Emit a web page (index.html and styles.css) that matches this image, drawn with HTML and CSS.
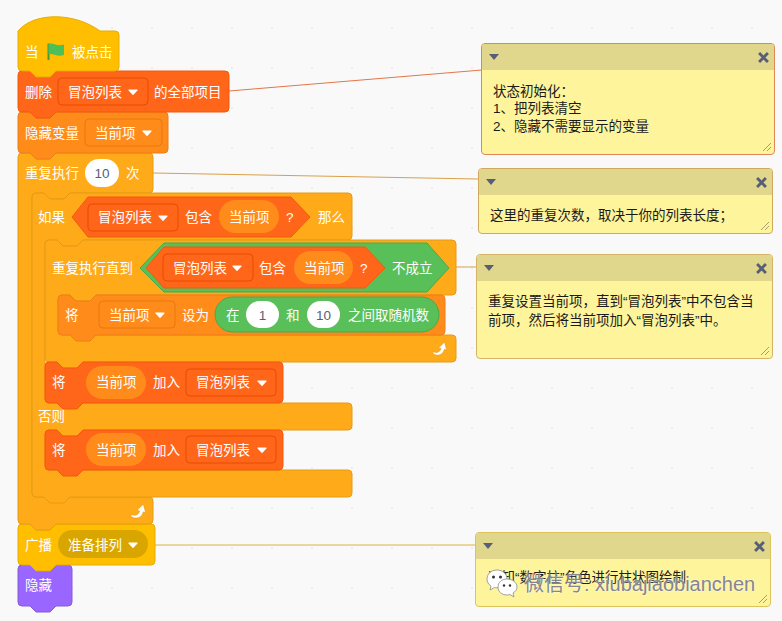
FILE: index.html
```html
<!DOCTYPE html>
<html lang="zh">
<head>
<meta charset="utf-8">
<title>冒泡排序积木</title>
<link rel="stylesheet" href="styles.css">
</head>
<body>
<main class="canvas">
<svg class="blocks" width="782" height="621" viewBox="0 0 782 621">
  <defs>
    <symbol id="caret" viewBox="0 0 10 6"><path d="M1 1H9L5 5.4Z" fill="#fff" stroke="#fff" stroke-width="1.2" stroke-linejoin="round"/></symbol>
    <symbol id="loop" viewBox="0 0 16 16"><path d="M1 11.200C4 13 8.600 12.600 9.600 8L7 7.200L13.400 1.200L15.600 9.600L13.200 8.900C12 14.600 6 17 1 13.400Z" fill="#fff" stroke="#d98f0f" stroke-width="0.5"/></symbol>
  </defs>

  <line class="link link-red" x1="229" y1="91" x2="482" y2="70"/>
  <line class="link link-amber" x1="153" y1="173" x2="478" y2="179"/>
  <line class="link link-amber" x1="456" y1="267" x2="477" y2="267"/>
  <line class="link link-yellow" x1="155" y1="545" x2="476" y2="545"/>

  <!-- 隐藏 -->
  <path class="looks" d="M18 569Q18 565 22 565H30L36 571H50L56 565H68Q72 565 72 569V602Q72 606 68 606H56L50 612H36L30 606H22Q18 606 18 602Z"/>
  <text class="t" x="25" y="590">隐藏</text>

  <!-- 广播 -->
  <path class="event" d="M18 528Q18 524 22 524H30L36 530H50L56 524H151Q155 524 155 528V561Q155 565 151 565H56L50 571H36L30 565H22Q18 565 18 561Z"/>
  <text class="t" x="25" y="550">广播</text>
  <rect class="event-menu" x="58" y="530" width="90" height="28" rx="14"/>
  <text class="t" x="68" y="550">准备排列</text>
  <use href="#caret" x="128" y="542" width="10" height="6"/>

  <!-- 重复执行 10 次 -->
  <path class="control" d="M18 157Q18 153 22 153H30L36 159H50L56 153H149Q153 153 153 157V189Q153 193 149 193H70L64 199H50L44 193H36Q32 193 32 197V493Q32 497 36 497H149Q153 497 153 501V520Q153 524 149 524H56L50 530H36L30 524H22Q18 524 18 520Z"/>
  <text class="t" x="25" y="178">重复执行</text>
  <rect class="num" x="85" y="159" width="34" height="28" rx="14"/>
  <text class="v" x="102" y="178">10</text>
  <text class="t" x="126" y="178">次</text>
  <use href="#loop" x="130" y="503" width="16" height="16"/>

  <!-- 如果 那么 否则 -->
  <path class="control" d="M32 197Q32 193 36 193H44L50 199H64L70 193H348Q352 193 352 197V236Q352 240 348 240H83L77 246H63L57 240H49Q45 240 45 244V399Q45 403 49 403H348Q352 403 352 407V426Q352 430 348 430H83L77 436H63L57 430H49Q45 430 45 434V466Q45 470 49 470H348Q352 470 352 474V493Q352 497 348 497H70L64 503H50L44 497H36Q32 497 32 493Z"/>
  <text class="t" x="38" y="222">如果</text>
  <path class="delete" d="M72 217L88 197H291L310 217L291 237H88Z"/>
  <rect class="delete-menu" x="88" y="204" width="90" height="27" rx="4"/>
  <text class="t" x="98" y="222">冒泡列表</text>
  <use href="#caret" x="158" y="215" width="10" height="6"/>
  <text class="t" x="185" y="222">包含</text>
  <rect class="var-pill" x="219" y="200" width="60" height="33" rx="16.5"/>
  <text class="t" x="229" y="222">当前项</text>
  <text class="t" x="286" y="222">?</text>
  <text class="t" x="318" y="222">那么</text>
  <text class="t" x="38" y="421">否则</text>

  <!-- 重复执行直到 -->
  <path class="control" d="M45 244Q45 240 49 240H57L63 246H77L83 240H452Q456 240 456 244V291Q456 295 452 295H96L90 301H76L70 295H62Q58 295 58 299V331Q58 335 62 335H452Q456 335 456 339V358Q456 362 452 362H83L77 368H63L57 362H49Q45 362 45 358Z"/>
  <text class="t" x="52" y="273">重复执行直到</text>
  <path class="operator" d="M140 268L164 243H427L449 268L427 292H164Z"/>
  <path class="delete" d="M146 268L164 247H365L385 268L365 288H164Z"/>
  <rect class="delete-menu" x="163" y="254" width="90" height="27" rx="4"/>
  <text class="t" x="173" y="273">冒泡列表</text>
  <use href="#caret" x="232" y="265" width="10" height="6"/>
  <text class="t" x="259" y="273">包含</text>
  <rect class="var-pill" x="294" y="251" width="59" height="33" rx="16.5"/>
  <text class="t" x="304" y="273">当前项</text>
  <text class="t" x="360" y="273">?</text>
  <text class="t" x="392" y="273">不成立</text>
  <use href="#loop" x="432" y="341" width="15" height="15"/>

  <!-- 将 当前项 设为 -->
  <path class="variable" d="M58 299Q58 295 62 295H70L76 301H90L96 295H441Q445 295 445 299V331Q445 335 441 335H96L90 341H76L70 335H62Q58 335 58 331Z"/>
  <text class="t" x="65" y="320">将</text>
  <rect class="variable-menu" x="99" y="301" width="76" height="27" rx="4"/>
  <text class="t" x="109" y="320">当前项</text>
  <use href="#caret" x="155" y="312" width="10" height="6"/>
  <text class="t" x="182" y="320">设为</text>
  <rect class="operator" x="215" y="297" width="224" height="35" rx="17.5"/>
  <text class="t" x="226" y="320">在</text>
  <rect class="num" x="246" y="301" width="33" height="27" rx="13.5"/>
  <text class="v" x="262.5" y="320">1</text>
  <text class="t" x="286" y="320">和</text>
  <rect class="num" x="307" y="301" width="33" height="27" rx="13.5"/>
  <text class="v" x="323.5" y="320">10</text>
  <text class="t" x="348" y="320">之间取随机数</text>

  <!-- 将 当前项 加入 (1) -->
  <path class="delete" d="M45 366Q45 362 49 362H57L63 368H77L83 362H279Q283 362 283 366V399Q283 403 279 403H83L77 409H63L57 403H49Q45 403 45 399Z"/>
  <text class="t" x="52" y="387">将</text>
  <rect class="var-pill" x="86" y="366" width="60" height="33" rx="16.5"/>
  <text class="t" x="96" y="387">当前项</text>
  <text class="t" x="153" y="387">加入</text>
  <rect class="delete-menu" x="186" y="369" width="90" height="27" rx="4"/>
  <text class="t" x="196" y="387">冒泡列表</text>
  <use href="#caret" x="257" y="380" width="10" height="6"/>

  <!-- 将 当前项 加入 (2) -->
  <path class="delete" d="M45 434Q45 430 49 430H57L63 436H77L83 430H279Q283 430 283 434V466Q283 470 279 470H83L77 476H63L57 470H49Q45 470 45 466Z"/>
  <text class="t" x="52" y="455">将</text>
  <rect class="var-pill" x="86" y="433" width="60" height="33" rx="16.5"/>
  <text class="t" x="96" y="455">当前项</text>
  <text class="t" x="153" y="455">加入</text>
  <rect class="delete-menu" x="186" y="436" width="90" height="27" rx="4"/>
  <text class="t" x="196" y="455">冒泡列表</text>
  <use href="#caret" x="257" y="447" width="10" height="6"/>

  <!-- 隐藏变量 -->
  <path class="variable" d="M18 116Q18 112 22 112H30L36 118H50L56 112H164Q168 112 168 116V149Q168 153 164 153H56L50 159H36L30 153H22Q18 153 18 149Z"/>
  <text class="t" x="25" y="138">隐藏变量</text>
  <rect class="variable-menu" x="85" y="119" width="77" height="27" rx="4"/>
  <text class="t" x="95" y="138">当前项</text>
  <use href="#caret" x="142" y="130" width="10" height="6"/>

  <!-- 删除 -->
  <path class="delete" d="M18 75Q18 71 22 71H30L36 77H50L56 71H225Q229 71 229 75V108Q229 112 225 112H56L50 118H36L30 112H22Q18 112 18 108Z"/>
  <text class="t" x="25" y="97">删除</text>
  <rect class="delete-menu" x="58" y="78" width="90" height="27" rx="4"/>
  <text class="t" x="68" y="97">冒泡列表</text>
  <use href="#caret" x="128" y="89" width="10" height="6"/>
  <text class="t" x="154" y="97">的全部项目</text>

  <!-- 当 绿旗 被点击 -->
  <path class="event" d="M18 31C34 12 74 12 100 31H115Q119 31 119 35V67Q119 71 115 71H56L50 77H36L30 71H22Q18 71 18 67Z"/>
  <text class="t" x="25" y="57">当</text>
  <path class="flag-pole" d="M48.500 43.500V60"/>
  <path class="flag" d="M48.500 44C52.500 42 56 47 64 44.500V55C56.500 57.500 52.500 52.500 48.500 54.500Z"/>
  <text class="t" x="72" y="57">被点击</text>
</svg>

<section class="comment c1">
  <header class="comment-head">
    <svg class="tri" width="10" height="6" viewBox="0 0 10 6"><path d="M0 0H10L5 6Z"/></svg>
    <svg class="close" width="11" height="11" viewBox="0 0 10 10"><path d="M1 1L9 9M9 1L1 9"/></svg>
  </header>
  <p class="comment-body">状态初始化&#xFF1A;<br>1、把列表清空<br>2、隐藏不需要显示的变量</p>
  <svg class="grip" width="10" height="10" viewBox="0 0 10 10"><path d="M1 9L9 1M5 9L9 5"/></svg>
</section>

<section class="comment c2">
  <header class="comment-head">
    <svg class="tri" width="10" height="6" viewBox="0 0 10 6"><path d="M0 0H10L5 6Z"/></svg>
    <svg class="close" width="11" height="11" viewBox="0 0 10 10"><path d="M1 1L9 9M9 1L1 9"/></svg>
  </header>
  <p class="comment-body">这里的重复次数&#xFF0C;取决于你的列表长度&#xFF1B;</p>
  <svg class="grip" width="10" height="10" viewBox="0 0 10 10"><path d="M1 9L9 1M5 9L9 5"/></svg>
</section>

<section class="comment c3">
  <header class="comment-head">
    <svg class="tri" width="10" height="6" viewBox="0 0 10 6"><path d="M0 0H10L5 6Z"/></svg>
    <svg class="close" width="11" height="11" viewBox="0 0 10 10"><path d="M1 1L9 9M9 1L1 9"/></svg>
  </header>
  <p class="comment-body">重复设置当前项&#xFF0C;直到“冒泡列表”中不包含当前项&#xFF0C;然后将当前项加入“冒泡列表”中。</p>
  <svg class="grip" width="10" height="10" viewBox="0 0 10 10"><path d="M1 9L9 1M5 9L9 5"/></svg>
</section>

<section class="comment c4">
  <header class="comment-head">
    <svg class="tri" width="10" height="6" viewBox="0 0 10 6"><path d="M0 0H10L5 6Z"/></svg>
    <svg class="close" width="11" height="11" viewBox="0 0 10 10"><path d="M1 1L9 9M9 1L1 9"/></svg>
  </header>
  <p class="comment-body">通知“数字柱”角色进行柱状图绘制</p>
  <svg class="grip" width="10" height="10" viewBox="0 0 10 10"><path d="M1 9L9 1M5 9L9 5"/></svg>
</section>

<div class="watermark">
  <svg class="wechat" width="32" height="30" viewBox="0 0 32 30">
    <path class="bubble" d="M11 1C5 1 1 5 1 10C1 13 2.500 15.500 5 17L4 21L8.500 18.500C9.500 18.700 10 18.800 11 18.800C17 18.800 21 15 21 10C21 5 17 1 11 1Z"/>
    <path class="bubble" d="M21 10C15.500 10 12 13.500 12 18C12 22.500 15.500 26 21 26C22 26 23 25.800 24 25.500L28 28L27 24C29.500 22.500 31 20.500 31 18C31 13.500 26.500 10 21 10Z"/>
    <circle class="eye" cx="7.500" cy="8" r="1.500"/><circle class="eye" cx="14.500" cy="8" r="1.500"/>
    <circle class="eye" cx="18" cy="16.500" r="1.200"/><circle class="eye" cx="24" cy="16.500" r="1.200"/>
  </svg>
  <span class="mark-text">微信号: xiubajiaobianchen</span>
</div>
</main>
</body>
</html>
```

FILE: styles.css
```css
* { box-sizing: border-box; }
html, body { margin: 0; padding: 0; }
body {
  width: 782px;
  height: 621px;
  overflow: hidden;
  background-color: #f9f9f9;
  font-family: "Liberation Sans", "Noto Sans CJK SC", sans-serif;
}
.canvas {
  position: relative;
  width: 782px;
  height: 621px;
  background-image: radial-gradient(circle, #ececec 0.8px, transparent 1.2px);
  background-size: 40px 40px;
  background-position: 12px 8px;
}
.blocks { position: absolute; left: 0; top: 0; }

.t, .v {
  font-family: "Liberation Sans", "Noto Sans CJK SC", sans-serif;
  font-size: 13.5px;
}
.t { fill: #fff; }
.v { fill: #575e75; text-anchor: middle; }

.link { stroke-width: 1; }
.link-red { stroke: #e2764a; }
.link-amber { stroke: #d9a04a; }
.link-yellow { stroke: #dcb440; }

.event { fill: #ffbf00; stroke: #e6ac00; stroke-width: 1; }
.event-menu { fill: #d9a600; }
.control { fill: #ffab19; stroke: #e69a14; stroke-width: 1; }
.looks { fill: #9966ff; stroke: #855cd6; stroke-width: 1; }
.delete { fill: #ff661a; stroke: #f2590d; stroke-width: 1; }
.delete-menu { fill: #ff661a; stroke: #e64d00; stroke-width: 1; }
.variable { fill: #ff8c1a; stroke: #ee7d16; stroke-width: 1; }
.variable-menu { fill: #ff8c1a; stroke: #e8770f; stroke-width: 1; }
.var-pill { fill: #ff8c1a; }
.operator { fill: #59c059; stroke: #4aa84a; stroke-width: 1; }
.num { fill: #fff; }
.flag { fill: #4cbf56; }
.flag-pole { stroke: #45993d; stroke-width: 2; fill: none; }

.comment {
  position: absolute;
  display: flex;
  flex-direction: column;
  background: #fef49c;
  border: 1px solid #d4b568;
  border-radius: 4px;
  overflow: hidden;
}
.c1 { left: 481px; top: 43px; width: 294px; height: 112px; border-color: #e0875a; }
.c2 { left: 478px; top: 168px; width: 295px; height: 66px; border-color: #d0a95e; }
.c3 { left: 476px; top: 254px; width: 297px; height: 105px; }
.c4 { left: 475px; top: 532px; width: 296px; height: 75px; border-color: #dcc35c; }

.comment-head {
  flex: none;
  height: 26px;
  display: flex;
  align-items: center;
  justify-content: space-between;
  padding: 0 5px 0 7px;
  background: #e0d78c;
}
.tri path { fill: #575e75; }
.close path { fill: none; stroke: #575e75; stroke-width: 2.6; }
.comment-body {
  margin: 0;
  padding: 12px 11px 0;
  font-size: 13.5px;
  line-height: 17.5px;
  color: #1a1a1a;
}
.c1 .comment-body { padding-top: 12.5px; }
.c3 .comment-body { padding-top: 12px; line-height: 18.5px; }
.c4 .comment-body { padding-top: 10px; padding-left: 12px; }
.grip { position: absolute; right: 2px; bottom: 2px; }
.grip path { fill: none; stroke: #a89f66; stroke-width: 1; }

.watermark {
  position: absolute;
  left: 486px;
  top: 569px;
  display: flex;
  align-items: center;
  gap: 6px;
}
.bubble { fill: #fff; stroke: #8a8a8a; stroke-width: 0.8; }
.eye { fill: #333; }
.mark-text {
  font-size: 20px;
  line-height: 30px;
  white-space: nowrap;
  color: #85858f;
  text-shadow: 0 0 2px #fff;
}
```
